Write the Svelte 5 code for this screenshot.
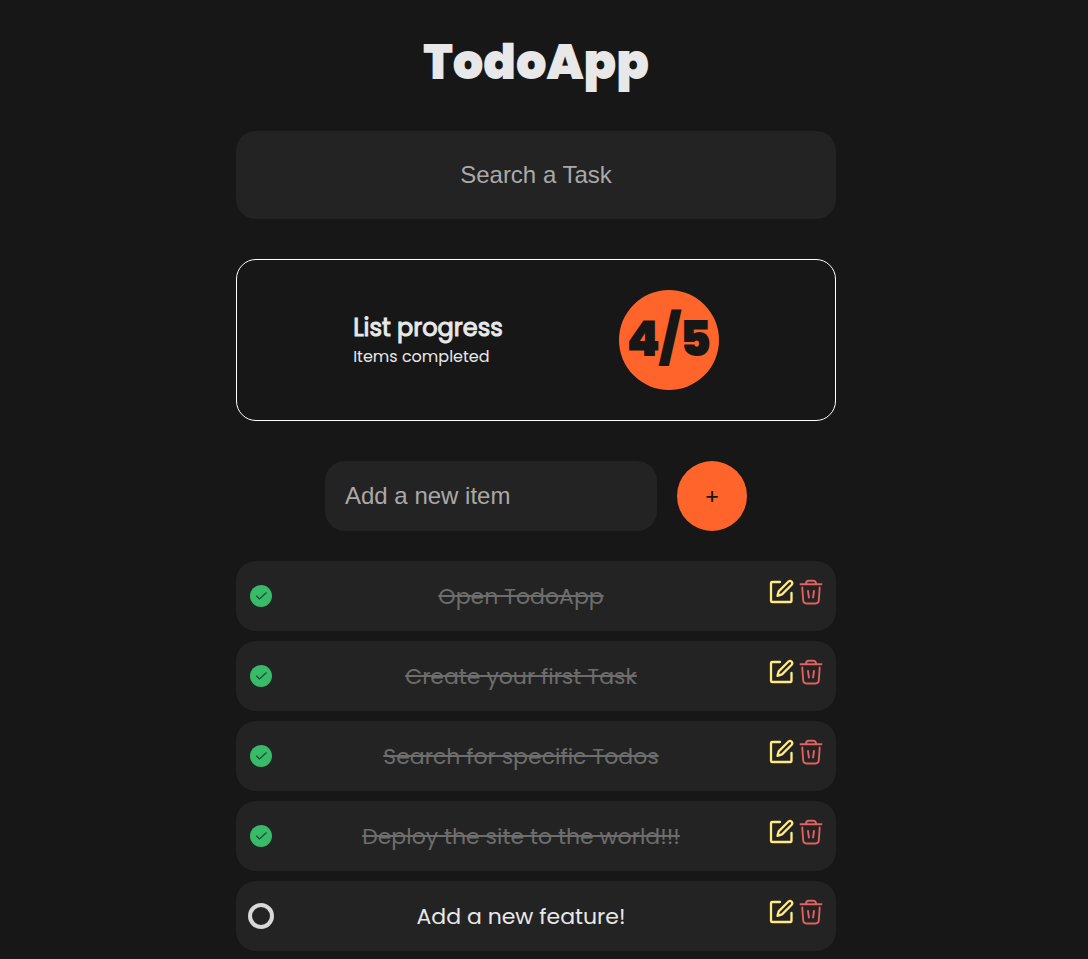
<script>
  let todos = $state([
    { text: 'Open TodoApp', done: true },
    { text: 'Create your first Task', done: true },
    { text: 'Search for specific Todos', done: true },
    { text: 'Deploy the site to the world!!!', done: true },
    { text: 'Add a new feature!', done: false }
  ]);
  let query = $state('');
  let draft = $state('');

  let completed = $derived(todos.filter((t) => t.done).length);
  let visible = $derived(todos.filter((t) => t.text.toLowerCase().includes(query.toLowerCase())));

  function add(event) {
    event.preventDefault();
    if (!draft.trim()) return;
    todos.push({ text: draft.trim(), done: false });
    draft = '';
  }

  function edit(todo) {
    draft = todo.text;
    remove(todo);
  }

  function remove(todo) {
    todos = todos.filter((t) => t !== todo);
  }
</script>

<main>
  <h1>TodoApp</h1>

  <input class="search" type="text" aria-label="Search a Task" placeholder="Search a Task" bind:value={query} />

  <section class="progress">
    <div class="summary">
      <h2>List progress</h2>
      <p>Items completed</p>
    </div>
    <div class="score">{completed}/{todos.length}</div>
  </section>

  <form onsubmit={add}>
    <input type="text" aria-label="Add a new item" placeholder="Add a new item" bind:value={draft} />
    <button aria-label="Add">+</button>
  </form>

  <ul>
    {#each visible as todo}
      <li>
        <input type="checkbox" aria-label={todo.text} bind:checked={todo.done} />
        <svg class="mark" viewBox="0 0 26 26" aria-hidden="true">
          {#if todo.done}
            <circle cx="13" cy="13" r="11" fill="#38bb68" />
            <path d="M8.2 12.8 11.5 16 18.5 9.5" fill="none" stroke="#1d4a2e" stroke-width="1.2" />
          {:else}
            <circle cx="13" cy="13" r="11" fill="none" stroke="#d8d8d8" stroke-width="4" />
          {/if}
        </svg>
        <span class:done={todo.done}>{todo.text}</span>
        <div class="actions">
          <button class="edit" aria-label="Edit" onclick={() => edit(todo)}>
            <svg viewBox="0 0 26 26" fill="none" stroke="currentColor" stroke-width="2.3" stroke-linecap="round" stroke-linejoin="round">
              <path d="M12 3H4Q3 3 3 4V22Q3 23 4 23H22.500Q23.500 23 23.500 22V14" />
              <path d="M9.500 16.800 10.700 12.400 20.500 2.500Q22 1.200 23.500 2.500 25 4.200 23.700 5.700L14 15.400Z" />
            </svg>
          </button>
          <button class="delete" aria-label="Delete" onclick={() => remove(todo)}>
            <svg viewBox="0 0 26 26" fill="none" stroke="currentColor" stroke-width="1.900" stroke-linecap="round" stroke-linejoin="round">
              <path d="M2.500 5.300H23.500M7.800 5Q8.300 1.700 10.500 1.700H15.500Q17.700 1.700 18.200 5" />
              <path d="M4.300 8.500 5.200 21.500Q5.500 24.500 8.500 24.500H17.500Q20.500 24.500 20.800 21.500L21.700 8.500M10 12 10.900 18.500M16 12 15.100 18.500" />
            </svg>
          </button>
        </div>
      </li>
    {/each}
  </ul>
</main>

<style>
  :global(body) {
    background: #171717;
  }

  main {
    display: flex;
    flex-direction: column;
    align-items: center;
    padding: 27px 16px 8px 0;
    color: #e8e8e8;
    font-family: Poppins, Inter, sans-serif;
  }

  h1,
  h2,
  p,
  ul {
    margin: 0;
    padding: 0;
  }

  h1 {
    font-size: 48px;
    line-height: 72px;
    font-weight: 900;
  }

  input,
  button {
    box-sizing: border-box;
    border: 0;
    font-family: Arial, "Liberation Sans", sans-serif;
    font-size: 24px;
  }

  input {
    background: #232323;
    color: #e8e8e8;
    border-radius: 20px;
  }

  input::placeholder {
    color: #a9a9a9;
    opacity: 1;
  }

  .search,
  .progress,
  ul {
    box-sizing: border-box;
    width: 100%;
    max-width: 600px;
  }

  .search {
    margin-top: 32px;
    padding: 30px;
    line-height: 28px;
    text-align: center;
  }

  .progress {
    display: flex;
    align-items: center;
    justify-content: space-evenly;
    margin-top: 40px;
    padding: 30px 0;
    border: 1px solid #fff;
    border-radius: 20px;
  }

  h2 {
    font-size: 24px;
    line-height: 34px;
    font-weight: 400;
    -webkit-text-stroke: 1px currentColor;
  }

  p {
    font-size: 16px;
    line-height: 24px;
  }

  .score {
    display: flex;
    align-items: center;
    justify-content: center;
    width: 100px;
    height: 100px;
    border-radius: 50%;
    background: #ff652b;
    color: #171717;
    font-size: 48px;
    font-weight: 900;
  }

  form {
    display: flex;
    gap: 20px;
    margin: 40px 0 30px;
  }

  form input {
    width: 332px;
    height: 70px;
    padding: 0 20px;
  }

  form button {
    width: 70px;
    height: 70px;
    padding: 0;
    border-radius: 50%;
    background: #ff652b;
    color: #171717;
    font-family: Poppins, Inter, sans-serif;
    font-size: 22px;
  }

  ul {
    display: grid;
    gap: 10px;
    list-style: none;
  }

  li {
    position: relative;
    display: grid;
    grid-template-columns: 50px 1fr 80px;
    align-items: center;
    min-height: 70px;
    border-radius: 20px;
    background: #232323;
    font-size: 22px;
    text-align: center;
  }

  li input {
    position: absolute;
    left: 12px;
    width: 26px;
    height: 26px;
    margin: 0;
    opacity: 0;
    cursor: pointer;
  }

  .mark {
    justify-self: center;
    width: 26px;
    height: 26px;
  }

  .done {
    color: #6d6d6d;
    text-decoration: line-through;
    text-decoration-thickness: 2px;
  }

  .actions {
    display: flex;
    justify-content: center;
    gap: 4px;
    padding-bottom: 8px;
  }

  .actions button {
    display: flex;
    padding: 0;
    background: none;
    cursor: pointer;
  }

  .actions svg {
    width: 26px;
    height: 26px;
  }

  .edit {
    color: #ffeb7f;
  }

  .delete {
    color: #e26060;
  }
</style>
